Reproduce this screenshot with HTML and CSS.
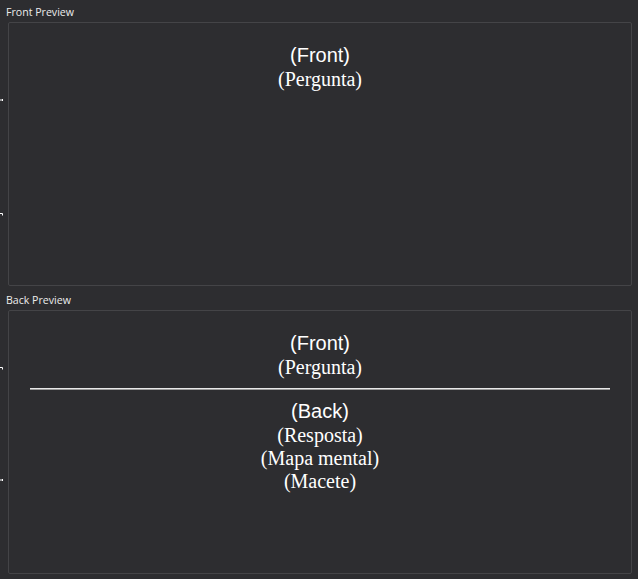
FILE: index.html
```html
<!DOCTYPE html>
<html>
<head>
<meta charset="utf-8">
<link rel="stylesheet" href="styles.css">
</head>
<body>
<div class="app">
  <div class="label">Front Preview</div>
  <div class="preview">
    <div class="card">
      <div class="sans">(Front)</div>
      <div class="serif">(Pergunta)</div>
    </div>
  </div>
  <div class="label">Back Preview</div>
  <div class="preview">
    <div class="card">
      <div class="sans">(Front)</div>
      <div class="serif">(Pergunta)</div>
      <hr class="answer">
      <div class="sans">(Back)</div>
      <div class="serif">(Resposta)</div>
      <div class="serif">(Mapa mental)</div>
      <div class="serif">(Macete)</div>
    </div>
  </div>
  <svg class="mark m1" width="4" height="4" viewBox="0 0 4 4"><path d="M0 2H3M2 1L3 2L2 3" stroke="#fff" stroke-width="1" fill="none"/></svg>
  <svg class="mark m2" width="4" height="4" viewBox="0 0 4 4"><path d="M0 1.5H2.5V3.5" stroke="#fff" stroke-width="1" fill="none"/></svg>
  <svg class="mark m3" width="4" height="4" viewBox="0 0 4 4"><path d="M0 1.5H2.5V3.5" stroke="#fff" stroke-width="1" fill="none"/></svg>
  <svg class="mark m4" width="4" height="4" viewBox="0 0 4 4"><path d="M0 2H3M2 1L3 2L2 3" stroke="#fff" stroke-width="1" fill="none"/></svg>
</div>
</body>
</html>
```
FILE: styles.css
```css
html, body {
  margin: 0;
  padding: 0;
  background: #2d2d30;
}
.app {
  position: relative;
  width: 638px;
  height: 579px;
  display: flex;
  flex-direction: column;
  box-sizing: border-box;
  padding: 0 6px 5px 8px;
  font-family: "Open Sans", "Noto Sans", sans-serif;
}
.label {
  height: 22px;
  margin-left: -2px;
  font-size: 10.6px;
  line-height: 24px;
  color: #ececec;
  flex: none;
}
.label + .preview + .label {
  height: 24px;
  line-height: 28px;
}
.preview {
  height: 264px;
  border: 1px solid #444447;
  border-radius: 2px;
  box-sizing: border-box;
  flex: none;
}
.card {
  padding: 21px 21px 0 21px;
  text-align: center;
  color: #ffffff;
}
.sans {
  font-family: "Liberation Sans", Arial, sans-serif;
  font-size: 20px;
  line-height: 23px;
  height: 24px;
}
.serif {
  font-family: "Liberation Serif", "Times New Roman", serif;
  font-size: 20px;
  line-height: 23px;
}
hr.answer {
  border: none;
  border-top: 1px solid #e8e8e8;
  border-bottom: 1px solid #9a9a9a;
  margin: 9px 0 10px 0;
  height: 0;
}
.mark {
  position: absolute;
  left: 0;
}
.m1 { top: 98px; }
.m2 { top: 212px; }
.m3 { top: 366px; }
.m4 { top: 478px; }
```
